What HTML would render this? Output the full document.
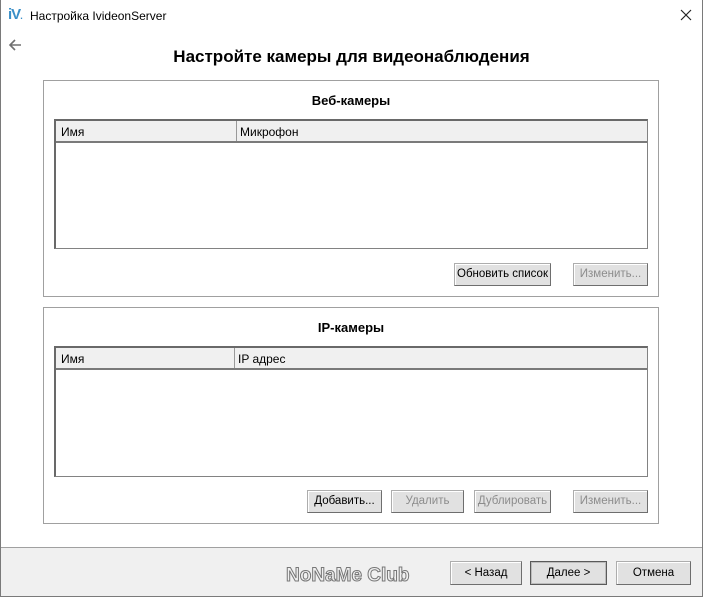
<!DOCTYPE html>
<html><head><meta charset="utf-8"><style>
*{box-sizing:border-box;margin:0;padding:0}
body{width:703px;height:597px;position:relative;background:#fff;font-family:"Liberation Sans","DejaVu Sans",sans-serif;font-size:12px;color:#000;overflow:hidden}
.win{position:absolute;left:0;top:0;width:703px;height:597px;border:1px solid #7a7a7a;border-top:none}
.abs{position:absolute}
.panel{position:absolute;left:43px;width:616px;border:1px solid #a0a0a0;background:#fff}
.ptitle{position:absolute;left:0;right:0;text-align:center;font-weight:bold;font-size:13px}
.table{position:absolute;left:10px;width:594px;border:1px solid #828282;border-left:2px solid #696969;border-top:2px solid #696969;background:#fff}
.hdr{height:22px;background:#f0f0f0;border-bottom:2px solid #7a7a7a;position:relative}
.hdr span{position:absolute;top:4px;font-size:12px}
.hdr .sep{position:absolute;top:0;height:20px;width:1px;background:#999}
.btn{position:absolute;height:23px;background:#e1e1e1;border:1px solid #adadad;border-right-color:#6e6e6e;border-bottom-color:#6e6e6e;text-align:center;line-height:21px;font-size:11.5px;box-shadow:inset 1px 1px 0 #fff;white-space:nowrap}
.dis{color:#8c8c8c}
.foot{position:absolute;left:1px;right:1px;top:547px;bottom:1px;background:#f0f0f0;border-top:1px solid #a0a0a0}
</style></head><body>
<div class="win"></div>
<div class="abs" style="left:8px;top:6px;font-size:15px;font-weight:bold;color:#3a8fc8;letter-spacing:-1px">iV<span style="font-size:9px">.</span></div>
<div class="abs" style="left:30px;top:9px;font-size:12px">Настройка IvideonServer</div>
<svg class="abs" style="left:680px;top:9px" width="12" height="12"><path d="M1 1L11 11M11 1L1 11" stroke="#222" stroke-width="1.2"/></svg>
<svg class="abs" style="left:8px;top:38px" width="14" height="14"><path d="M13 7H2M7 2L2 7l5 5" stroke="#707070" stroke-width="1.6" fill="none"/></svg>
<div class="abs" style="left:0;right:0;top:47px;text-align:center;font-weight:bold;font-size:17px">Настройте камеры для видеонаблюдения</div>

<div class="panel" style="top:80px;height:217px">
<div class="ptitle" style="top:12px">Веб-камеры</div>
<div class="table" style="top:38px;height:130px"><div class="hdr"><span style="left:5px">Имя</span><div class="sep" style="left:180px"></div><span style="left:184px">Микрофон</span></div></div>
<div class="btn" style="left:410px;top:182px;width:97px">Обновить список</div>
<div class="btn dis" style="left:529px;top:182px;width:75px">Изменить...</div>
</div>

<div class="panel" style="top:307px;height:217px">
<div class="ptitle" style="top:12px">IP-камеры</div>
<div class="table" style="top:38px;height:131px"><div class="hdr"><span style="left:5px">Имя</span><div class="sep" style="left:178px"></div><span style="left:182px">IP адрес</span></div></div>
<div class="btn" style="left:263px;top:182px;width:75px">Добавить...</div>
<div class="btn dis" style="left:347px;top:182px;width:73px">Удалить</div>
<div class="btn dis" style="left:430px;top:182px;width:77px">Дублировать</div>
<div class="btn dis" style="left:529px;top:182px;width:75px">Изменить...</div>
</div>

<div class="foot"></div>
<div class="abs" style="left:286px;top:565px;font-size:19px;color:#f0f0f0;-webkit-text-stroke:1px #777;font-weight:bold">NoNaMe Club</div>
<div class="btn" style="left:450px;top:561px;width:72px;height:24px;line-height:22px">&lt; Назад</div>
<div class="btn" style="left:530px;top:561px;width:77px;height:24px;line-height:22px;border:1px solid #5a5a5a;box-shadow:inset 0 0 0 1px #bcbcbc">Далее &gt;</div>
<div class="btn" style="left:616px;top:561px;width:75px;height:24px;line-height:22px">Отмена</div>
</body></html>
